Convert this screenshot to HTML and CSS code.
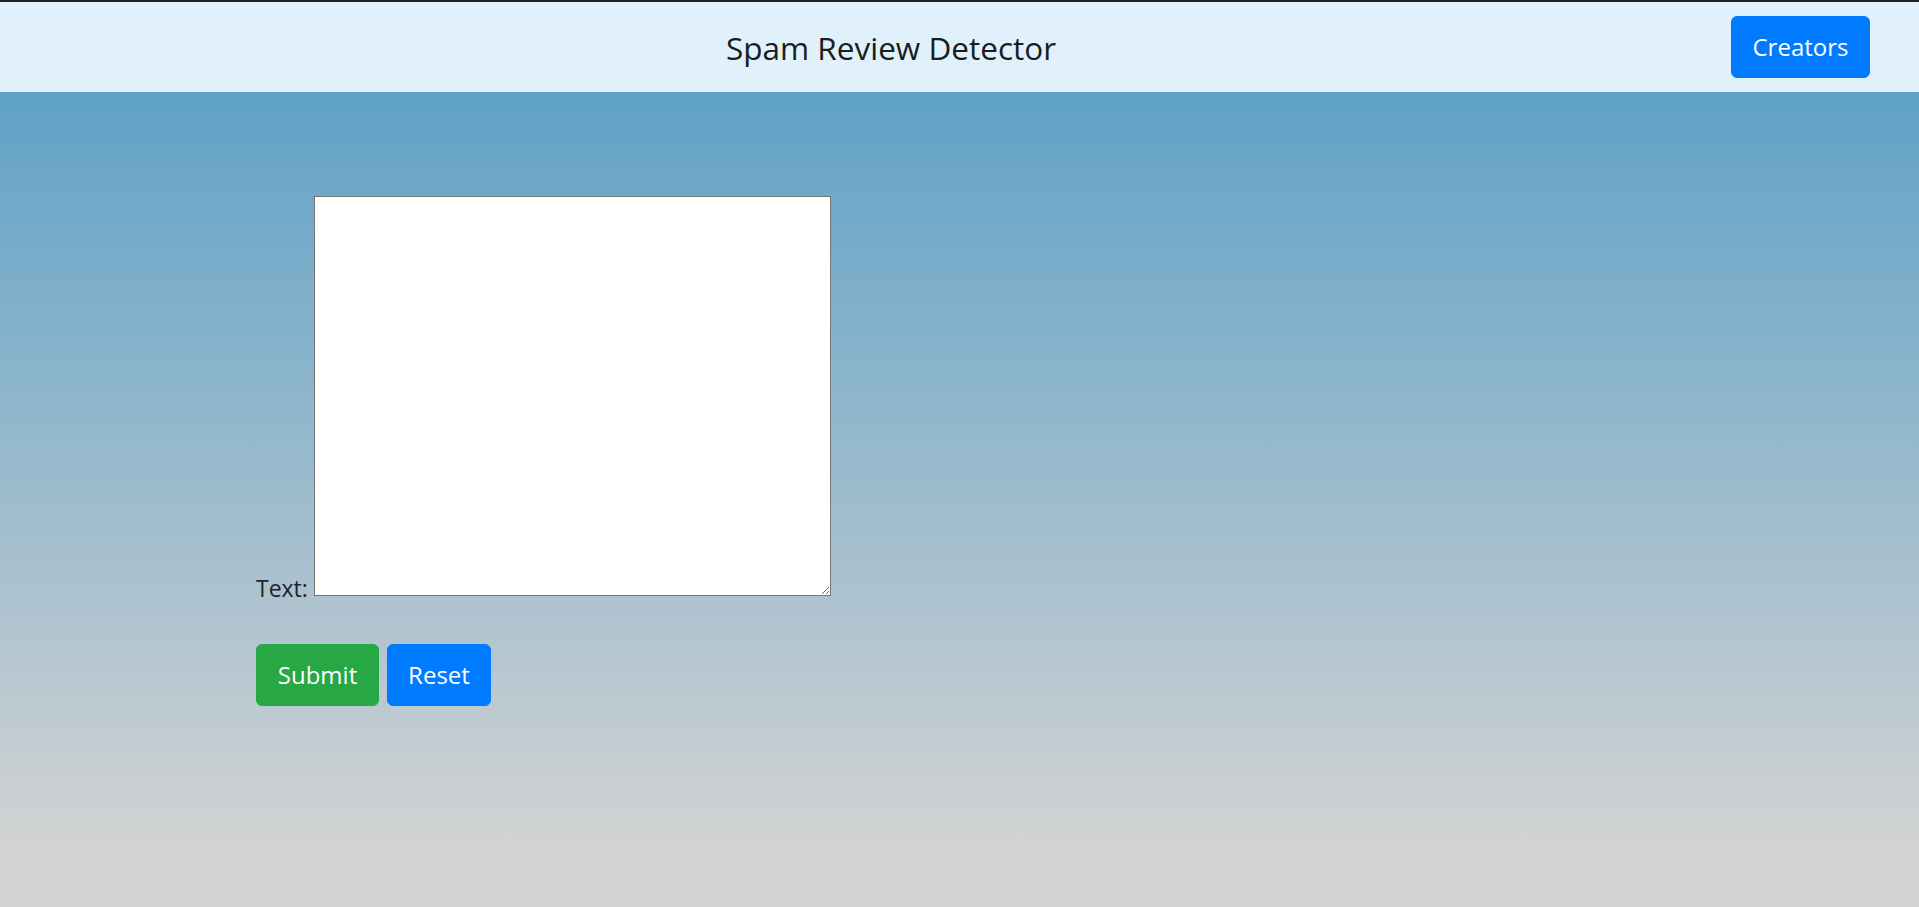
FILE: index.html
```html
<!DOCTYPE html>
<html lang="en">
<head>
<meta charset="utf-8">
<title>Spam Review Detector</title>
<link rel="stylesheet" href="styles.css">
</head>
<body>
<header class="topbar">
  <h3 class="title">Spam Review Detector</h3>
  <button class="btn btn-blue btn-creators" type="button">Creators</button>
</header>
<main class="main">
  <form class="form">
    <div class="field">
      <label class="label" for="text">Text:</label>
      <textarea id="text" class="textarea"></textarea>
    </div>
    <div class="actions">
      <button class="btn btn-green" type="button">Submit</button>
      <button class="btn btn-blue" type="reset">Reset</button>
    </div>
  </form>
</main>
</body>
</html>
```
FILE: styles.css
```css
html, body {
  margin: 0;
  padding: 0;
}
body {
  font-family: "Open Sans", "Noto Sans", "Liberation Sans", sans-serif;
  color: #212529;
  min-height: 907px;
  display: flex;
  flex-direction: column;
  background: #d3d3d3;
  border-top: 2px solid #222;
  box-sizing: border-box;
}
.topbar {
  height: 90px;
  background: #e1f1fb;
  display: flex;
  align-items: center;
  padding: 0 49px 0 51px;
  box-sizing: border-box;
}
.title {
  flex: 1;
  margin: 0 0 -2px;
  text-align: center;
  font-weight: 400;
  font-size: 31.5px;
  line-height: 1.2;
  color: #1a1d20;
}
.btn {
  font-family: inherit;
  font-size: 24px;
  line-height: 40px;
  height: 62px;
  padding: 0 21px;
  border: 1px solid transparent;
  border-radius: 6px;
  color: #fff;
  cursor: pointer;
}
.btn-creators {
  width: 139px;
  padding: 0;
}
.btn-blue {
  background: #007bff;
  border-color: #007bff;
}
.btn-green {
  background: #28a745;
  border-color: #28a745;
}
.main {
  flex: 1;
  background: linear-gradient(to bottom, #60a2c7 0%, #d3d3d3 100%);
  background-size: 100% 760px;
  background-repeat: no-repeat;
  padding: 104px 0 0 256px;
}
.form {
  display: flex;
  flex-direction: column;
  align-items: flex-start;
}
.field {
  display: flex;
  align-items: flex-end;
  gap: 6px;
}
.label {
  font-size: 23px;
  line-height: 1;
  margin-bottom: -4px;
}
.textarea {
  width: 517px;
  height: 400px;
  box-sizing: border-box;
  border: 1px solid #767676;
  margin: 0;
  background: #fff;
  resize: both;
  font-family: inherit;
}
.actions {
  display: flex;
  gap: 8px;
  margin-top: 48px;
}
.actions .btn:first-child {
  width: 123px;
  padding: 0;
}
.actions .btn:last-child {
  width: 104px;
  padding: 0;
}
```
